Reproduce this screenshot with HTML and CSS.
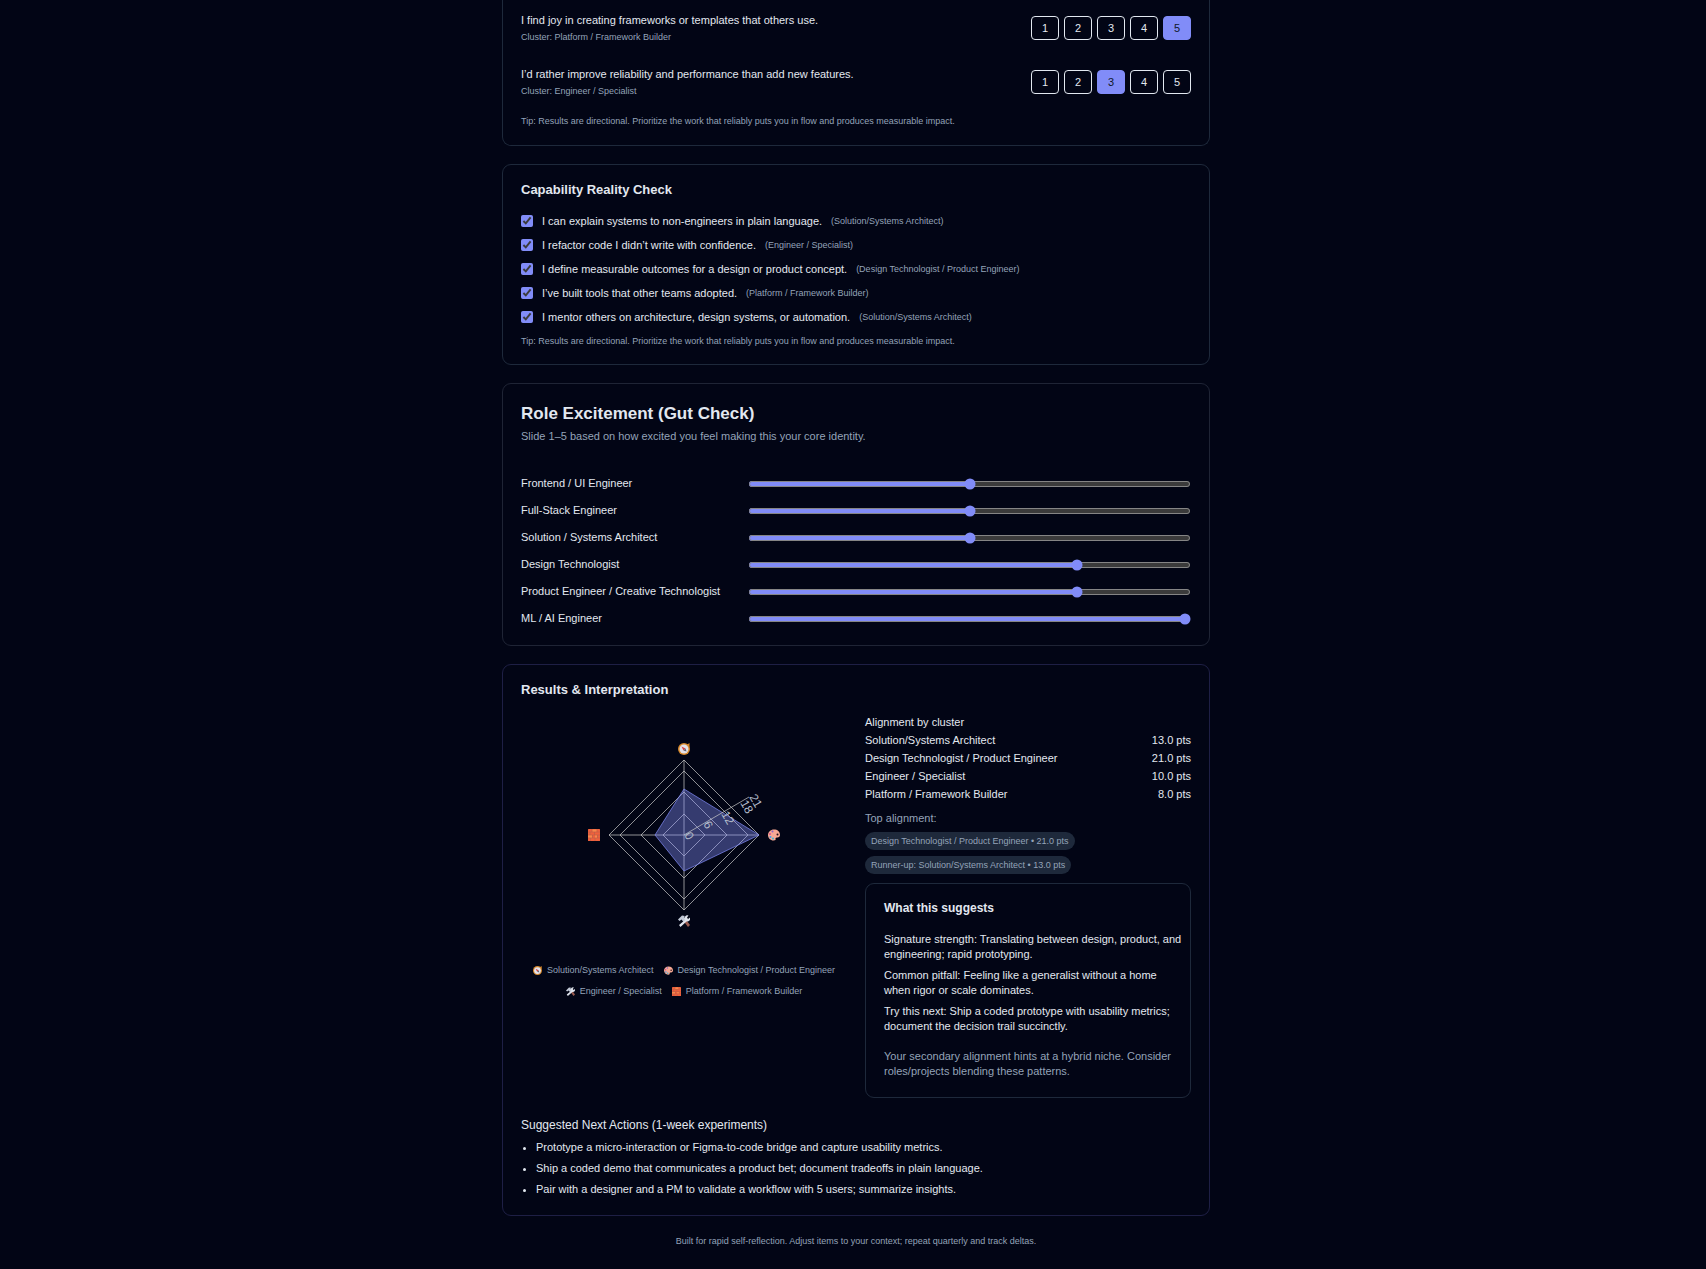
FILE: index.html
```html
<!DOCTYPE html>
<html lang="en">
<head>
    <meta charset="UTF-8">
    <meta name="viewport" content="width=device-width, initial-scale=1.0">
    <title>Career Alignment Self-Assessment</title>
    <link rel="stylesheet" href="styles.css">
</head>
<body>
    <!-- Icon set shared by the radar chart and its legend -->
    <svg class="icon-defs" aria-hidden="true">
        <symbol id="icon-compass" viewBox="0 0 24 24">
            <path d="M17 4l6-4v8z" fill="#d98a2b"/>
            <circle cx="12" cy="12" r="12" fill="#d98a2b"/>
            <circle cx="12" cy="12" r="9" fill="#e4e2ea"/>
            <path d="M7 7l8 4-4 4z" fill="#d8423f"/>
            <path d="M17 17l-6-2 4-4z" fill="#5b6474"/>
        </symbol>
        <symbol id="icon-palette" viewBox="0 0 24 24">
            <path d="M12 1C5 1 0 6 0 12s5 11 11 11c4 0 5-2 4-4 0-2 2-2 4-2 3 0 5-2 5-5C24 5 19 1 12 1z" fill="#f7a994"/>
            <circle cx="9" cy="5" r="2" fill="#8b63c9"/>
            <circle cx="4" cy="10" r="2" fill="#e0528a"/>
            <circle cx="5" cy="16" r="2" fill="#3f9fe8"/>
            <circle cx="10" cy="19" r="2" fill="#37b6d6"/>
            <circle cx="19" cy="11" r="2" fill="#20101c"/>
        </symbol>
        <symbol id="icon-tools" viewBox="0 0 24 24">
            <path d="M11 12l4-4 9 12-4 4z" fill="#9a5b50"/>
            <path d="M0 9l8-8 6 1-2 2 4 5-5 5-4-5-4 3z" fill="#c3cad8"/>
            <path d="M21 1a6 6 0 0 0-7 9L2 20l3 4 12-11a6 6 0 0 0 7-8l-4 3-2-3z" fill="#dfe3ec"/>
        </symbol>
        <symbol id="icon-brick" viewBox="0 0 24 24">
            <rect width="24" height="24" rx="1" fill="#f0603c"/>
            <path d="M0 6h24M0 12h24M0 18h24M8 0v6M18 0v6M4 6v6M13 6v6M9 12v6M19 12v6M5 18v6M14 18v6" stroke="#a8604e" stroke-width="1"/>
            <path d="M9 1h8v4H9zM14 13h4v4h-4zM0 13h8v4H0z" fill="#f58a4c"/>
        </symbol>
    </svg>

    <main class="container">
        <section class="card card-first">
            <div class="question">
                <div>
                    <div class="question-text">I find joy in creating frameworks or templates that others use.</div>
                    <div class="hint">Cluster: Platform / Framework Builder</div>
                </div>
                <div class="scale">
                    <button type="button">1</button>
                    <button type="button">2</button>
                    <button type="button">3</button>
                    <button type="button">4</button>
                    <button type="button" class="selected">5</button>
                </div>
            </div>
            <div class="question">
                <div>
                    <div class="question-text">I’d rather improve reliability and performance than add new features.</div>
                    <div class="hint">Cluster: Engineer / Specialist</div>
                </div>
                <div class="scale">
                    <button type="button">1</button>
                    <button type="button">2</button>
                    <button type="button" class="selected">3</button>
                    <button type="button">4</button>
                    <button type="button">5</button>
                </div>
            </div>
            <p class="hint tip">Tip: Results are directional. Prioritize the work that reliably puts you in flow and produces measurable impact.</p>
        </section>

        <section class="card">
            <h3>Capability Reality Check</h3>
            <div class="checks">
                <label class="check"><input type="checkbox" checked> I can explain systems to non-engineers in plain language. <span class="hint">(Solution/Systems Architect)</span></label>
                <label class="check"><input type="checkbox" checked> I refactor code I didn’t write with confidence. <span class="hint">(Engineer / Specialist)</span></label>
                <label class="check"><input type="checkbox" checked> I define measurable outcomes for a design or product concept. <span class="hint">(Design Technologist / Product Engineer)</span></label>
                <label class="check"><input type="checkbox" checked> I’ve built tools that other teams adopted. <span class="hint">(Platform / Framework Builder)</span></label>
                <label class="check"><input type="checkbox" checked> I mentor others on architecture, design systems, or automation. <span class="hint">(Solution/Systems Architect)</span></label>
            </div>
            <p class="hint tip">Tip: Results are directional. Prioritize the work that reliably puts you in flow and produces measurable impact.</p>
        </section>

        <section class="card card-roles">
            <h2>Role Excitement (Gut Check)</h2>
            <p class="muted subtitle">Slide 1–5 based on how excited you feel making this your core identity.</p>
            <div class="roles">
                <div class="role">
                    <label for="role-frontend">Frontend / UI Engineer</label>
                    <input id="role-frontend" type="range" min="1" max="5" value="3">
                </div>
                <div class="role">
                    <label for="role-fullstack">Full-Stack Engineer</label>
                    <input id="role-fullstack" type="range" min="1" max="5" value="3">
                </div>
                <div class="role">
                    <label for="role-architect">Solution / Systems Architect</label>
                    <input id="role-architect" type="range" min="1" max="5" value="3">
                </div>
                <div class="role">
                    <label for="role-design">Design Technologist</label>
                    <input id="role-design" type="range" min="1" max="5" value="4">
                </div>
                <div class="role">
                    <label for="role-product">Product Engineer / Creative Technologist</label>
                    <input id="role-product" type="range" min="1" max="5" value="4">
                </div>
                <div class="role">
                    <label for="role-ml">ML / AI Engineer</label>
                    <input id="role-ml" type="range" min="1" max="5" value="5">
                </div>
            </div>
        </section>

        <section class="card card-results">
            <h3>Results &amp; Interpretation</h3>
            <div class="results">
                <div class="chart">
                    <svg class="radar" viewBox="0 -2 326 250" role="img" aria-label="Alignment radar chart">
                        <g class="radar-grid">
                            <path d="M163 99l21 21-21 21-21-21z"/>
                            <path d="M163 77l43 43-43 43-43-43z"/>
                            <path d="M163 56l64 64-64 64-64-64z"/>
                            <path d="M163 45l75 75-75 75-75-75z"/>
                            <path d="M163 45v150M88 120h150"/>
                        </g>
                        <path class="radar-area" d="M163 74L238 120L163 156L134 120z"/>
                        <path class="radar-axis" d="M163 120L228 82"/>
                        <g class="radar-ticks">
                            <text transform="translate(163 120) rotate(60)">0</text>
                            <text transform="translate(182 109) rotate(60)">6</text>
                            <text transform="translate(200 99) rotate(60)">12</text>
                            <text transform="translate(219 88) rotate(60)">18</text>
                            <text transform="translate(228 82) rotate(60)">21</text>
                        </g>
                        <use href="#icon-compass" x="157" y="28" width="12" height="12"/>
                        <use href="#icon-palette" x="247" y="114" width="12" height="12"/>
                        <use href="#icon-tools" x="157" y="200" width="12" height="12"/>
                        <use href="#icon-brick" x="67" y="114" width="12" height="12"/>
                    </svg>
                    <div class="legend hint">
                        <span><svg><use href="#icon-compass"/></svg>Solution/Systems Architect</span>
                        <span><svg><use href="#icon-palette"/></svg>Design Technologist / Product Engineer</span>
                        <span><svg><use href="#icon-tools"/></svg>Engineer / Specialist</span>
                        <span><svg><use href="#icon-brick"/></svg>Platform / Framework Builder</span>
                    </div>
                </div>
                <div class="summary">
                    <div class="score">Alignment by cluster</div>
                    <div class="score"><span>Solution/Systems Architect</span><span>13.0 pts</span></div>
                    <div class="score"><span>Design Technologist / Product Engineer</span><span>21.0 pts</span></div>
                    <div class="score"><span>Engineer / Specialist</span><span>10.0 pts</span></div>
                    <div class="score"><span>Platform / Framework Builder</span><span>8.0 pts</span></div>
                    <p class="muted top-label">Top alignment:</p>
                    <div class="pills">
                        <span class="pill">Design Technologist / Product Engineer • 21.0 pts</span>
                        <span class="pill">Runner-up: Solution/Systems Architect • 13.0 pts</span>
                    </div>
                    <div class="card suggests">
                        <h4>What this suggests</h4>
                        <p>Signature strength: Translating between design, product, and engineering; rapid prototyping.</p>
                        <p>Common pitfall: Feeling like a generalist without a home when rigor or scale dominates.</p>
                        <p>Try this next: Ship a coded prototype with usability metrics; document the decision trail succinctly.</p>
                        <p class="muted secondary">Your secondary alignment hints at a hybrid niche. Consider roles/projects blending these patterns.</p>
                    </div>
                </div>
            </div>
            <div class="actions">
                <div class="actions-title">Suggested Next Actions (1-week experiments)</div>
                <ul>
                    <li>Prototype a micro-interaction or Figma-to-code bridge and capture usability metrics.</li>
                    <li>Ship a coded demo that communicates a product bet; document tradeoffs in plain language.</li>
                    <li>Pair with a designer and a PM to validate a workflow with 5 users; summarize insights.</li>
                </ul>
            </div>
        </section>

        <footer class="hint">Built for rapid self-reflection. Adjust items to your context; repeat quarterly and track deltas.</footer>
    </main>
</body>
</html>
```
FILE: styles.css
```css
:root {
    color-scheme: dark;
    --bg: #020515;
    --text: #e2e8f0;
    --muted: #94a3b8;
    --border: #1e293b;
    --accent: #818cf8;
}
* {
    box-sizing: border-box;
}
body {
    margin: 0;
    padding-left: 6px;
    background-color: var(--bg);
    color: var(--text);
    font-family: "Liberation Sans", Arial, sans-serif;
    font-size: 11px;
    line-height: 15px;
}
h2, h3, h4, p, ul {
    margin: 0;
}
h2 {
    font-size: 17px;
    line-height: 26px;
}
h3 {
    font-size: 13px;
    line-height: 18px;
}
h4 {
    font-size: 12px;
    line-height: 16px;
}
.container {
    max-width: 708px;
    margin: 0 auto;
    display: flex;
    flex-direction: column;
    gap: 18px;
}
.icon-defs {
    display: none;
}
.card {
    border: 1px solid var(--border);
    border-radius: 9px;
    padding: 16px 18px;
}
.card-first {
    border-top: 0;
    border-radius: 0 0 9px 9px;
    padding-top: 1px;
    padding-bottom: 17px;
}
.hint {
    color: var(--muted);
    font-size: 9px;
    line-height: 14px;
}
.muted {
    color: var(--muted);
}
.tip {
    margin-top: 5px;
}

/* Flow questions */
.question {
    display: flex;
    justify-content: space-between;
    align-items: center;
    padding: 11px 0;
}
.question-text {
    margin-bottom: 2px;
    line-height: 16px;
}
.scale {
    display: flex;
    gap: 5px;
}
.scale button {
    width: 28px;
    height: 24px;
    padding: 0;
    border: 1px solid var(--text);
    border-radius: 4px;
    background: transparent;
    color: var(--text);
    font: inherit;
    cursor: pointer;
}
.scale .selected {
    background-color: var(--accent);
    border-color: var(--accent);
    color: #0f172a;
}

/* Capability checks */
.checks {
    margin-top: 10px;
}
.check {
    display: flex;
    align-items: center;
    gap: 9px;
    height: 24px;
}
.check input {
    width: 12px;
    height: 12px;
    margin: 0;
    accent-color: var(--accent);
}

/* Role sliders */
.card-roles {
    border-color: #1f2435;
    padding-top: 17px;
    padding-bottom: 13px;
}
.subtitle {
    margin-top: 2px;
}
.roles {
    margin-top: 26px;
}
.role {
    display: grid;
    grid-template-columns: 218px 1fr;
    gap: 9px;
    align-items: center;
    height: 27px;
}
.role input {
    width: 100%;
    margin: 0;
    accent-color: var(--accent);
    zoom: 0.75;
}

/* Results */
.card-results {
    border-color: #1e1f45;
    padding-bottom: 15px;
}
.results {
    display: grid;
    grid-template-columns: 1fr 1fr;
    gap: 18px;
    margin-top: 14px;
}
.radar {
    display: block;
    width: 100%;
}
.radar-grid path, .radar-axis {
    fill: none;
    stroke: #ccc;
    stroke-opacity: 0.7;
}
.radar-area {
    fill: var(--accent);
    fill-opacity: 0.4;
    stroke: var(--accent);
    stroke-opacity: 0.7;
}
.radar-ticks {
    fill: #b4bccb;
    font-size: 12px;
}
.legend {
    display: flex;
    flex-wrap: wrap;
    justify-content: center;
    gap: 7px 10px;
    padding: 0 9px;
}
.legend span {
    display: flex;
    align-items: center;
    gap: 5px;
}
.legend svg {
    width: 9px;
    height: 9px;
}
.score {
    display: flex;
    justify-content: space-between;
    line-height: 18px;
}
.top-label {
    margin-top: 8px;
}
.pills {
    display: flex;
    flex-direction: column;
    align-items: flex-start;
    gap: 6px;
    margin-top: 6px;
}
.pill {
    padding: 0 6px;
    border-radius: 9px;
    background-color: var(--border);
    color: var(--muted);
    font-size: 9px;
    line-height: 18px;
}
.suggests {
    margin-top: 9px;
    padding-right: 6px;
    padding-bottom: 18px;
}
.suggests p {
    margin-top: 6px;
}
.suggests h4 + p {
    margin-top: 16px;
}
.suggests .secondary {
    margin-top: 15px;
}
.actions {
    margin-top: 18px;
}
.actions-title {
    font-size: 12px;
    line-height: 18px;
}
.actions ul {
    margin-top: 3px;
    padding-left: 15px;
}
.actions li {
    line-height: 21px;
}
footer {
    padding-bottom: 18px;
    text-align: center;
}
```
